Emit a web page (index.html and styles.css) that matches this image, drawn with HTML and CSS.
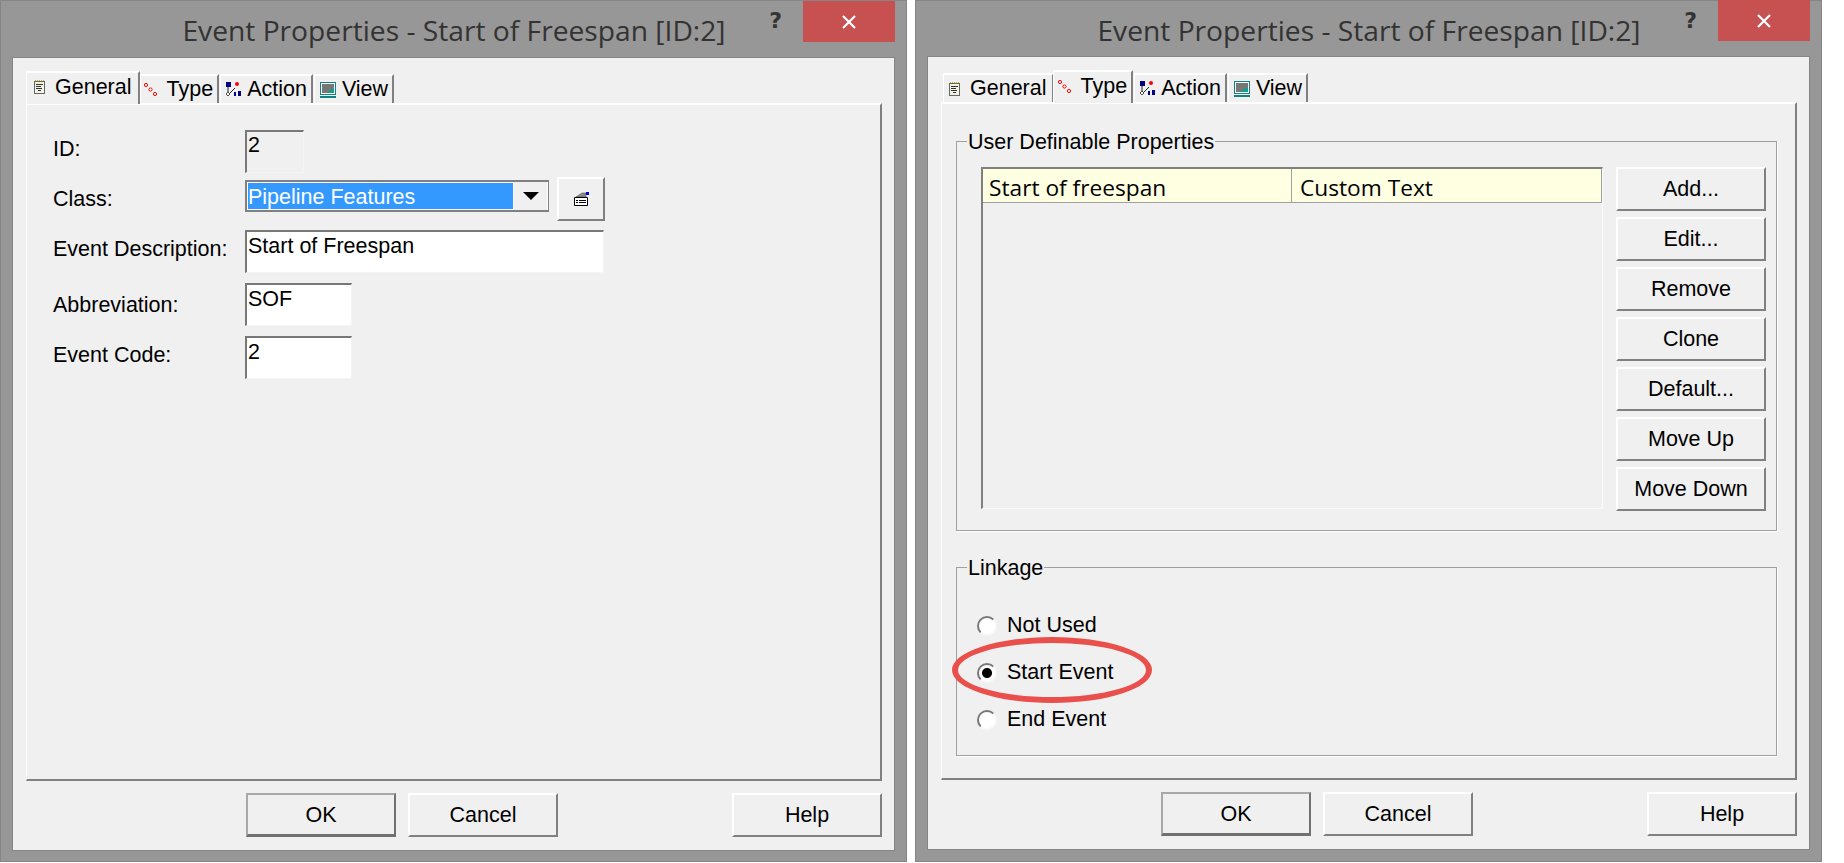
FILE: index.html
```html
<!DOCTYPE html>
<html lang="en">
<head>
    <meta charset="UTF-8">
    <meta name="viewport" content="width=device-width, initial-scale=1.0">
    <title>Event Properties</title>
    <link rel="stylesheet" href="styles.css">
</head>
<body>
    <svg class="icon-defs" aria-hidden="true">
        <symbol id="icon-general" viewBox="0 0 12 14">
            <rect x="0.5" y="1.5" width="10" height="12" fill="#f2f2e4" stroke="#666"/>
            <path d="M1 0.5h1M3 0.5h1M5 0.5h1M7 0.5h1M9 0.5h1" stroke="#c9b400"/>
            <path d="M2 4.5h7M2 6.5h5M2 8.5h6M4 10.5h3" stroke="#333"/>
        </symbol>
        <symbol id="icon-type" viewBox="0 0 13 13">
            <circle cx="2" cy="2" r="1.6" fill="#fff" stroke="#f00"/>
            <circle cx="6.5" cy="6.5" r="1.6" fill="#fff" stroke="#f00"/>
            <circle cx="11" cy="11" r="1.6" fill="#fff" stroke="#f00"/>
        </symbol>
        <symbol id="icon-action" viewBox="0 0 16 15">
            <rect x="0" y="0" width="5" height="5" fill="#000080"/>
            <circle cx="11" cy="2" r="2" fill="#f00"/>
            <path d="M9 6L3 12M2 5v5" stroke="#222" fill="none"/>
            <path d="M2 10l2 2-2 2-2-2z" fill="#fff" stroke="#222" stroke-width="0.8"/>
            <rect x="8" y="10" width="2" height="4" fill="#000080"/>
            <rect x="12" y="9" width="3" height="5" fill="#000080"/>
        </symbol>
        <symbol id="icon-view" viewBox="0 0 17 16">
            <rect x="0.5" y="0.5" width="15" height="12" fill="#fff" stroke="#108080"/>
            <rect x="2" y="2" width="12" height="9" fill="#777"/>
            <path d="M6 11l4-3 4-2v5z" fill="#1a9a8a"/>
            <rect x="0" y="14" width="16" height="2" fill="#108080"/>
        </symbol>
        <symbol id="icon-tool" viewBox="0 0 15 14">
            <path d="M2 5L8 1h4v4z" fill="#8a8a8a" stroke="#555" stroke-width="0.6"/>
            <path d="M0.5 5.5h13v8h-13z" fill="#fff" stroke="#000"/>
            <path d="M2 8.5h2M5 8.5h7M2 10.5h2M5 10.5h7" stroke="#000"/>
            <rect x="12" y="0" width="3" height="3" fill="#0000e0"/>
        </symbol>
    </svg>

    <div class="dialog dialog-left">
        <div class="titlebar">
            <span></span>
            <div class="title">Event Properties - Start of Freespan [ID:2]</div>
            <div class="controls">
                <span class="help-mark">?</span>
                <div class="close-btn">
                    <svg width="14" height="14" viewBox="0 0 14 14"><path d="M1 1L13 13M13 1L1 13" stroke="#fff" stroke-width="2.2"/></svg>
                </div>
            </div>
        </div>
        <div class="client">
            <div class="tabs">
                <div class="tab tab-general tab-active"><svg class="ico ico-general"><use href="#icon-general"/></svg>General</div>
                <div class="tab"><svg class="ico ico-type"><use href="#icon-type"/></svg>Type</div>
                <div class="tab"><svg class="ico ico-action"><use href="#icon-action"/></svg>Action</div>
                <div class="tab"><svg class="ico ico-view"><use href="#icon-view"/></svg>View</div>
            </div>
            <div class="panel panel-form">
                <div class="form-row">
                    <label>ID:</label>
                    <div class="field field-short field-readonly">2</div>
                </div>
                <div class="form-row">
                    <label>Class:</label>
                    <div class="combo">
                        <div class="combo-value">Pipeline Features</div>
                        <div class="combo-arrow"></div>
                    </div>
                    <div class="btn btn-tool"><svg class="ico-tool"><use href="#icon-tool"/></svg></div>
                </div>
                <div class="form-row">
                    <label>Event Description:</label>
                    <div class="field field-wide">Start of Freespan</div>
                </div>
                <div class="form-row form-row-spaced">
                    <label class="label-low">Abbreviation:</label>
                    <div class="field field-mid">SOF</div>
                </div>
                <div class="form-row form-row-spaced">
                    <label>Event Code:</label>
                    <div class="field field-mid">2</div>
                </div>
            </div>
            <div class="footer">
                <div class="btn btn-default">OK</div>
                <div class="btn">Cancel</div>
                <div class="btn btn-help">Help</div>
            </div>
        </div>
    </div>

    <div class="dialog dialog-right">
        <div class="titlebar">
            <span></span>
            <div class="title">Event Properties - Start of Freespan [ID:2]</div>
            <div class="controls">
                <span class="help-mark">?</span>
                <div class="close-btn">
                    <svg width="14" height="14" viewBox="0 0 14 14"><path d="M1 1L13 13M13 1L1 13" stroke="#fff" stroke-width="2.2"/></svg>
                </div>
            </div>
        </div>
        <div class="client">
            <div class="tabs">
                <div class="tab tab-general"><svg class="ico ico-general"><use href="#icon-general"/></svg>General</div>
                <div class="tab tab-active"><svg class="ico ico-type"><use href="#icon-type"/></svg>Type</div>
                <div class="tab"><svg class="ico ico-action"><use href="#icon-action"/></svg>Action</div>
                <div class="tab"><svg class="ico ico-view"><use href="#icon-view"/></svg>View</div>
            </div>
            <div class="panel panel-type">
                <fieldset class="group group-props">
                    <legend>User Definable Properties</legend>
                    <div class="list">
                        <div class="list-head">
                            <div class="list-cell list-cell-first">Start of freespan</div>
                            <div class="list-cell">Custom Text</div>
                        </div>
                    </div>
                    <div class="side-btns">
                        <div class="btn">Add...</div>
                        <div class="btn">Edit...</div>
                        <div class="btn">Remove</div>
                        <div class="btn">Clone</div>
                        <div class="btn">Default...</div>
                        <div class="btn">Move Up</div>
                        <div class="btn">Move Down</div>
                    </div>
                </fieldset>
                <fieldset class="group group-linkage">
                    <legend>Linkage</legend>
                    <div class="radio-row"><span class="radio"></span>Not Used</div>
                    <div class="radio-row"><span class="radio radio-on"></span>Start Event</div>
                    <div class="radio-row"><span class="radio"></span>End Event</div>
                    <div class="highlight"></div>
                </fieldset>
            </div>
            <div class="footer">
                <div class="btn btn-default">OK</div>
                <div class="btn">Cancel</div>
                <div class="btn btn-help">Help</div>
            </div>
        </div>
    </div>
</body>
</html>
```

FILE: styles.css
```css
html, body {
    margin: 0;
    padding: 0;
    height: 100%;
    background-color: #ffffff;
    overflow: hidden;
}
body {
    display: flex;
    align-items: flex-start;
    gap: 8px;
    font-family: "Liberation Sans", Arial, sans-serif;
    font-size: 21.5px;
    color: #000;
}
.icon-defs {
    display: none;
}
.dialog {
    width: 907px;
    height: 862px;
    box-sizing: border-box;
    display: flex;
    flex-direction: column;
    padding: 0 13px 12px;
    background-color: #979797;
    box-shadow: inset 0 0 0 1px #858585;
}
.dialog-right {
    padding-bottom: 13px;
}
.titlebar {
    height: 58px;
    flex: none;
    display: grid;
    grid-template-columns: 1fr auto 1fr;
    margin-right: -1px;
}
.dialog-right .titlebar {
    height: 57px;
}
.title {
    font-family: "Open Sans", sans-serif;
    font-size: 28.2px;
    color: #333;
    line-height: 60px;
    white-space: nowrap;
}
.controls {
    display: flex;
    justify-content: flex-end;
    align-items: flex-start;
    gap: 21px;
}
.help-mark {
    font-family: "DejaVu Sans", sans-serif;
    font-weight: bold;
    font-size: 22px;
    line-height: 42px;
    color: #333;
}
.close-btn {
    width: 92px;
    height: 41px;
    margin-top: 1px;
    background-color: #c75050;
    display: flex;
    align-items: center;
    justify-content: center;
}
.dialog-right .close-btn {
    margin-top: 0;
}
.client {
    flex: 1;
    display: flex;
    flex-direction: column;
    padding: 14px 12px 13px 13px;
    background-color: #f0f0f0;
    box-shadow: 0 0 0 1px #858585;
}

/* tabs */
.tabs {
    display: flex;
    align-items: flex-end;
    gap: 1px;
    height: 31px;
    padding-left: 2px;
}
.tab {
    height: 29px;
    box-sizing: border-box;
    display: flex;
    align-items: center;
    padding: 0 4px 0 5px;
    background-color: #f0f0f0;
    border-top: 2px solid #fff;
    border-left: 1px solid #fff;
    border-right: 2px solid #808080;
    white-space: nowrap;
}
.tab-general {
    padding-right: 5px;
}
.tab-active {
    position: relative;
    z-index: 1;
    height: 33px;
    margin: 0 0 -1px -2px;
    padding-bottom: 3px;
    padding-left: 6px;
}
.tab-general.tab-active {
    padding-left: 7px;
    padding-right: 6px;
    margin-right: -1px;
}
.ico {
    flex: none;
    margin-right: 5px;
}
.ico-general {
    width: 12px;
    height: 14px;
    margin-right: 9px;
}
.ico-type {
    width: 13px;
    height: 13px;
    margin-left: -2px;
    margin-right: 10px;
}
.ico-action {
    width: 16px;
    height: 15px;
}
.ico-view {
    width: 17px;
    height: 16px;
}
.ico-tool {
    width: 15px;
    height: 14px;
}

/* tab panel */
.panel {
    flex: 1;
    box-sizing: border-box;
    border-top: 2px solid #fff;
    border-left: 1px solid #fff;
    border-right: 2px solid #808080;
    border-bottom: 2px solid #808080;
}
.panel-form {
    display: flex;
    flex-direction: column;
    padding: 25px 0 0 26px;
}
.panel-type {
    padding: 24px 18px 0 14px;
}

/* left dialog form */
.form-row {
    display: flex;
    align-items: flex-start;
    height: 43px;
    margin-bottom: 7px;
}
.form-row-spaced {
    margin-top: 3px;
}
.form-row label {
    width: 192px;
    flex: none;
    line-height: 38px;
}
.form-row .label-low {
    padding-top: 3px;
}
.field {
    height: 43px;
    box-sizing: border-box;
    padding: 0 1px;
    line-height: 28px;
    background-color: #fff;
    border-top: 2px solid #787878;
    border-left: 2px solid #787878;
    border-right: 1px solid #f4f4f4;
    border-bottom: 1px solid #f4f4f4;
}
.field-readonly {
    background-color: #f0f0f0;
    line-height: 26px;
}
.field-short {
    width: 59px;
}
.field-mid {
    width: 107px;
}
.field-wide {
    width: 359px;
}
.combo {
    width: 304px;
    height: 32px;
    box-sizing: border-box;
    display: flex;
    padding: 1px;
    background-color: #fff;
    border: 2px solid #808080;
    border-right-width: 1px;
}
.combo-value {
    flex: 1;
    line-height: 28px;
    color: #fff;
    background-color: #3399ff;
}
.combo-arrow {
    width: 33px;
    display: flex;
    align-items: center;
    justify-content: center;
    background-color: #f0f0f0;
    margin: -1px 0 -1px 1px;
}
.combo-arrow::after {
    content: "";
    border-left: 8px solid transparent;
    border-right: 8px solid transparent;
    border-top: 8px solid #000;
}
.btn-tool {
    width: 48px;
    height: 46px;
    flex: none;
    margin: -3px 0 0 8px;
}

/* buttons */
.btn {
    height: 44px;
    box-sizing: border-box;
    display: flex;
    align-items: center;
    justify-content: center;
    background-color: #f0f0f0;
    border-top: 2px solid #fff;
    border-left: 2px solid #fff;
    border-right: 2px solid #808080;
    border-bottom: 2px solid #808080;
}
.btn-default {
    padding-top: 1px;
    border-top-color: #a8a8a8;
    border-left-color: #a8a8a8;
    border-bottom-width: 3px;
    border-right-color: #707070;
    border-bottom-color: #707070;
}
.footer {
    display: flex;
    gap: 12px;
    flex: none;
    margin-top: 12px;
    padding-left: 220px;
}
.footer .btn {
    width: 150px;
}
.footer .btn-help {
    margin-left: auto;
}

/* right dialog groups */
.group {
    position: relative;
    margin: 0;
    padding: 0;
    box-sizing: border-box;
    width: 821px;
    border: 1px solid #a0a0a0;
    box-shadow: 1px 1px 0 #fff;
}
.group legend {
    margin-left: 10px;
    padding: 2px 1px 0;
    line-height: 24px;
}
.group-props {
    height: 403px;
    display: flex;
    gap: 13px;
    padding-top: 13px;
}
.list {
    width: 622px;
    height: 342px;
    box-sizing: border-box;
    flex: none;
    margin-left: 24px;
    border-top: 2px solid #808080;
    border-left: 2px solid #808080;
    border-right: 1px solid #fafafa;
    border-bottom: 1px solid #fafafa;
}
.list-head {
    display: flex;
    height: 34px;
    box-sizing: border-box;
    font-family: "Open Sans", sans-serif;
    font-size: 22.7px;
    line-height: 28px;
    background-color: #ffffe1;
    border-bottom: 1px solid #a0a0a0;
    border-right: 1px solid #a0a0a0;
}
.list-cell {
    padding: 5px 0 0 8px;
}
.list-cell-first {
    width: 309px;
    box-sizing: border-box;
    flex: none;
    padding-left: 6px;
    border-right: 1px solid #a0a0a0;
}
.side-btns {
    width: 150px;
    display: flex;
    flex-direction: column;
    gap: 6px;
}
.group-linkage {
    height: 202px;
    margin-top: 23px;
    padding-top: 22px;
}
.radio-row {
    display: flex;
    align-items: center;
    height: 47px;
    margin-left: 20px;
    gap: 10px;
}
.radio {
    width: 20px;
    height: 20px;
    box-sizing: border-box;
    flex: none;
    border-radius: 50%;
    background-color: #fff;
    border: 2px solid;
    border-color: #787878 #f8f8f8 #f8f8f8 #787878;
}
.radio-on {
    background: radial-gradient(circle, #000 0, #000 4.5px, #fff 5.5px);
}
.highlight {
    position: absolute;
    left: -5px;
    top: 57px;
    width: 200px;
    height: 66px;
    box-sizing: border-box;
    border: 6px solid #e9504c;
    border-radius: 50%;
}
```
